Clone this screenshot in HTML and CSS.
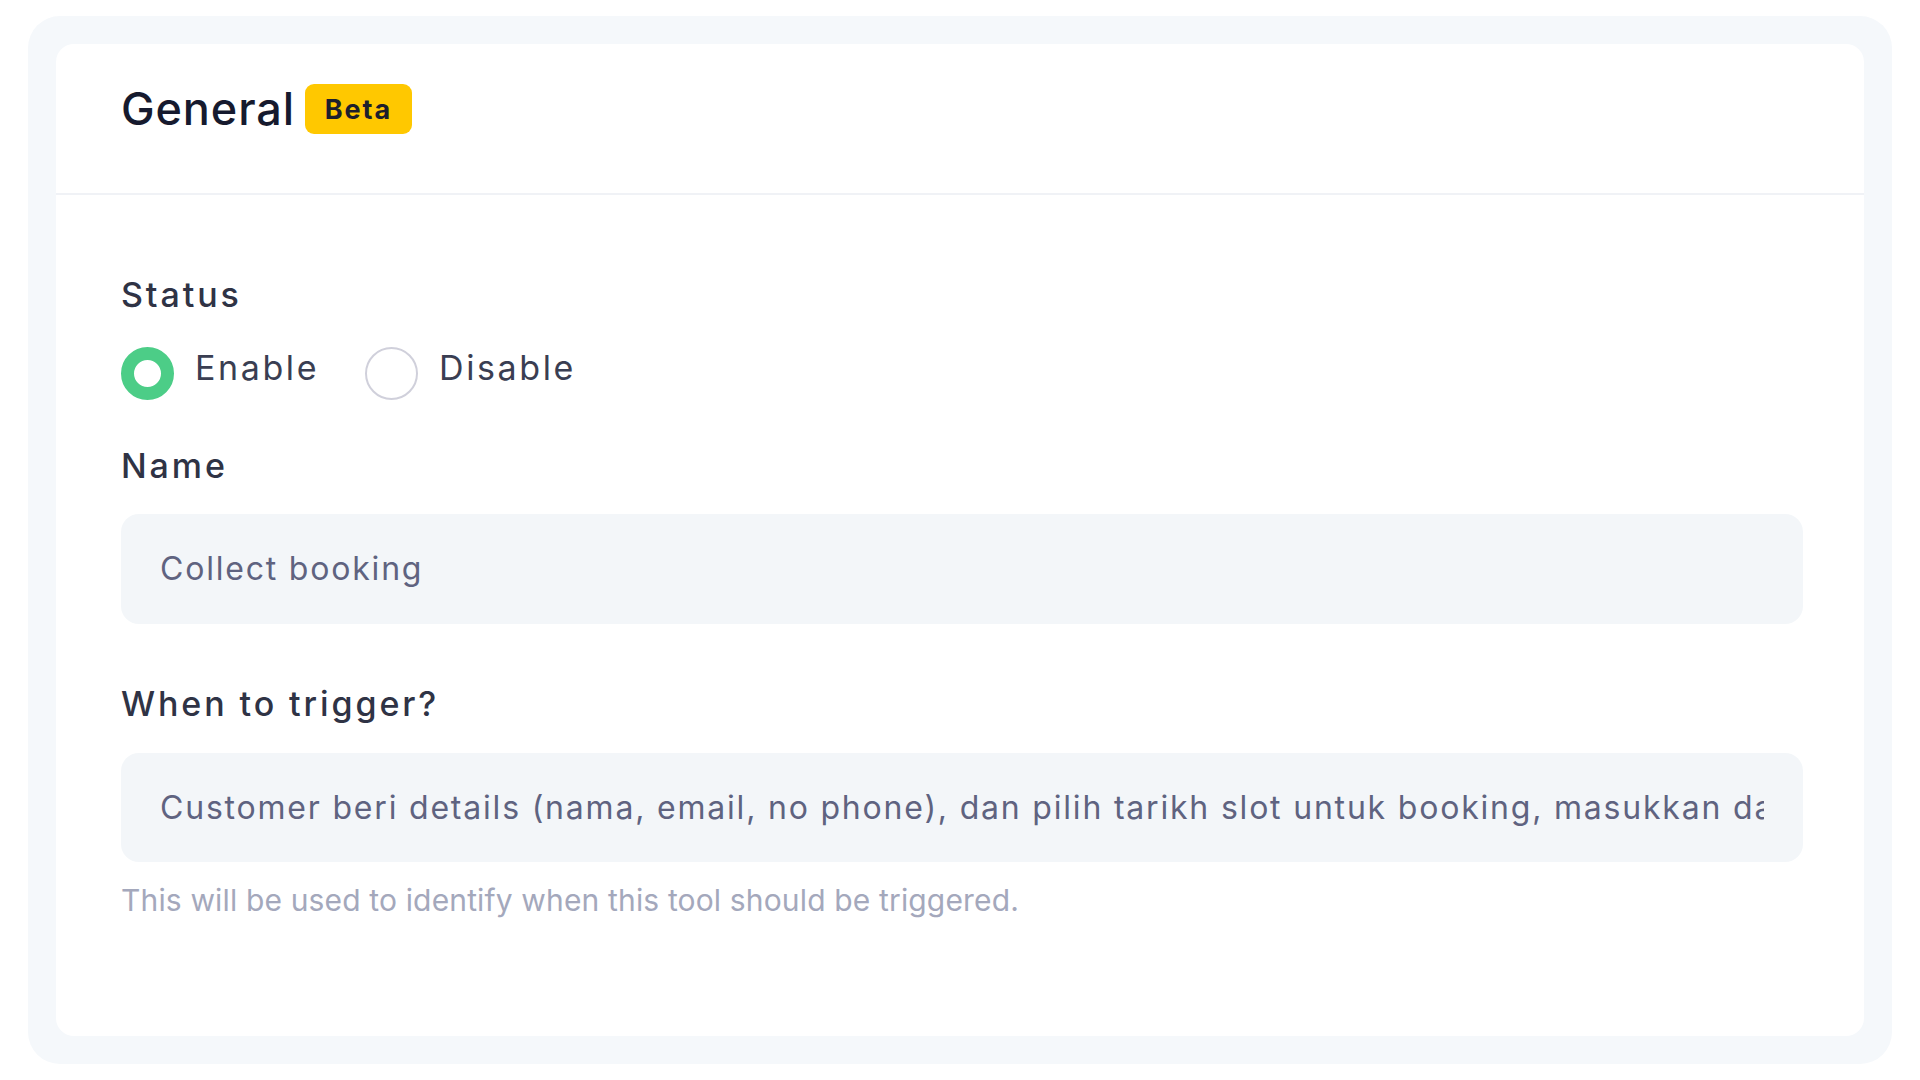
FILE: index.html
```html
<!DOCTYPE html>
<html lang="en">
<head>
<meta charset="utf-8">
<title>General</title>
<link rel="stylesheet" href="styles.css">
</head>
<body>
<div class="panel">
  <div class="card">
    <div class="card-header">
      <h1 class="title">General</h1>
      <span class="badge">Beta</span>
    </div>
    <div class="card-body">
      <div class="label">Status</div>
      <div class="radios">
        <label class="radio">
          <span class="dot dot-on"></span>
          <span class="radio-text">Enable</span>
        </label>
        <label class="radio">
          <span class="dot"></span>
          <span class="radio-text">Disable</span>
        </label>
      </div>
      <div class="label label-name">Name</div>
      <div class="input input-name"><span class="input-text">Collect booking</span></div>
      <div class="label label-trigger">When to trigger?</div>
      <div class="input input-trigger"><span class="input-text">Customer beri details (nama, email, no phone), dan pilih tarikh slot untuk booking, masukkan data ke dalam sistem dan hantar pengesahan kepada customer</span></div>
      <div class="help">This will be used to identify when this tool should be triggered.</div>
    </div>
  </div>
</div>
</body>
</html>
```
FILE: styles.css
```css
* { box-sizing: border-box; }
html, body { margin: 0; padding: 0; background: #ffffff; }
body {
  font-family: "Inter", "Noto Sans", sans-serif;
  color: #2f3345;
}
.panel {
  margin: 16px 28px 17px;
  padding: 28px;
  background: #f5f8fb;
  border-radius: 32px;
}
.card {
  background: #ffffff;
  border-radius: 18px;
}
.card-header {
  display: flex;
  align-items: center;
  gap: 10px;
  padding: 40px 65px 59px;
  border-bottom: 2px solid #f0f2f6;
}
.title {
  margin: 0;
  font-size: 45px;
  line-height: 50px;
  font-weight: 500;
  color: #161a2e;
  letter-spacing: 0.9px;
}
.badge {
  display: inline-flex;
  align-items: center;
  justify-content: center;
  width: 107px;
  height: 50px;
  border-radius: 9px;
  background: #ffc800;
  color: #1d1f2c;
  font-size: 27px;
  font-weight: 700;
  letter-spacing: 2px;
}
.card-body {
  padding: 80px 61px 118px 65px;
  display: flex;
  flex-direction: column;
}
.label {
  font-size: 34px;
  line-height: 40px;
  font-weight: 500;
  color: #2f3345;
  letter-spacing: 2.9px;
  margin-bottom: 3px;
}
.radios {
  display: flex;
  align-items: center;
  gap: 46px;
  margin-top: 29px;
}
.radio {
  display: flex;
  align-items: center;
  gap: 21px;
}
.dot {
  width: 53px;
  height: 53px;
  border-radius: 50%;
  border: 2px solid #d0d0db;
  background: #ffffff;
}
.dot-on {
  border: 13px solid #4ccd87;
}
.radio-text {
  font-size: 34px;
  line-height: 40px;
  font-weight: 400;
  color: #3a3e52;
  letter-spacing: 2.6px;
  margin-top: -11px;
}
.label-name { margin-top: 46px; }
.label-trigger { margin-top: 60px; }
.input {
  margin-top: 22px;
  height: 110px;
  display: flex;
  align-items: center;
  padding: 0 39px;
  background: #f3f6f9;
  border-radius: 18px;
}
.input-name { margin-top: 25px; }
.input-trigger {
  margin-top: 26px;
  height: 109px;
}
.input-text {
  flex: 1;
  min-width: 0;
  overflow: hidden;
  white-space: nowrap;
  font-size: 32px;
  line-height: 40px;
  color: #5f6380;
  letter-spacing: 1.8px;
}
.help {
  margin-top: 20px;
  font-size: 30px;
  line-height: 36px;
  color: #a4a8bc;
  letter-spacing: 0.15px;
}
```
